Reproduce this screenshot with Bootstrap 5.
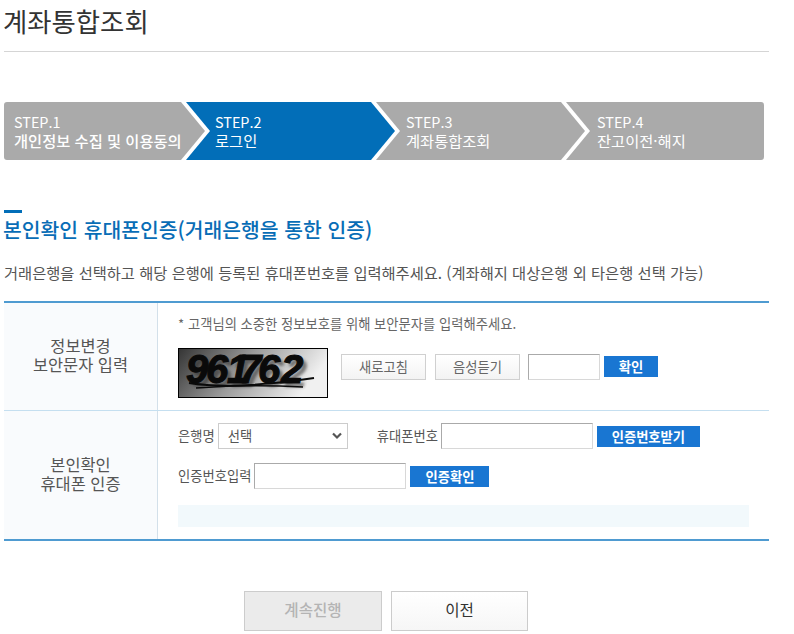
<!DOCTYPE html>
<html lang="ko">
<head>
<meta charset="utf-8">
<title>계좌통합조회</title>
<link href="https://cdn.jsdelivr.net/npm/bootstrap@5.3.0/dist/css/bootstrap.min.css" rel="stylesheet">
<style>
html,body{height:634px;overflow:hidden;background:#fff}
body{font-family:"Noto Sans CJK KR","Noto Sans",sans-serif;color:#555;font-size:13.3px;padding:0 25px 0 4px}
.page-title{font-size:26.4px;font-weight:400;color:#333;line-height:42px;height:52px;margin:0;text-indent:-1px;border-bottom:1px solid #d5d5d5}
.step-bar{display:flex;width:760px;height:58px;margin-top:50px}
.step-box{position:relative;background:#aaa;color:#fff;font-size:15.3px;line-height:19px;padding-top:10px;height:58px}
.step-box::before,.step-box::after{content:"";position:absolute;top:0;height:58px;left:calc(100% - 5px)}
.step-box::before{width:29px;background:#fff;clip-path:polygon(0 0,5px 0,29px 50%,5px 100%,0 100%)}
.step-box::after{width:24px;background:inherit;clip-path:polygon(0 0,100% 50%,0 100%)}
.step-box:last-child::before,.step-box:last-child::after{display:none}
.step-one{width:182px;padding-left:10px;border-radius:3px 0 0 3px;z-index:4}
.step-two{width:190px;padding-left:29px;background:#026eb8;z-index:3}
.step-three{width:190px;padding-left:30px;z-index:2}
.step-four{width:198px;padding-left:31px;border-radius:0 3px 3px 0;z-index:1}
.step-box span{display:block;white-space:nowrap}
.step-box .step-num{font-size:14.4px;font-weight:400}
.step-one .step-name{font-weight:500}
.section-mark{width:18px;height:3px;background:#026eb8;margin-top:50px}
.section-title{font-size:20.4px;font-weight:500;color:#086db6;line-height:30px;margin:1px 0 0;text-indent:-1px}
.section-desc{font-size:15.3px;line-height:22px;margin:17px 0 0;color:#555;white-space:nowrap}
.form-frame{width:765px;margin-top:18px;border-top:2px solid #4f9bd1;border-bottom:2px solid #4f9bd1}
.form-row{display:flex}
.first-row{height:108px;border-bottom:1px solid #c5dff0}
.second-row{height:128px}
.head-cell{width:154px;flex:none;background:#f9fbfd;border-right:1px solid #d3e0ea;font-size:16.4px;line-height:19px;color:#555;text-align:center;display:flex;align-items:center;justify-content:center}
.first-row .head-cell{padding-bottom:4px}
.second-row .head-cell{padding-bottom:2px}
.body-cell{flex:1;padding-left:20px}
.note-line{line-height:18px;margin-top:12px;color:#666;white-space:nowrap}
.captcha-row{display:flex;align-items:flex-start;margin-top:15px}
.captcha-pic{display:block;width:150px;height:50px;border:1px solid #000;flex:none}
.gray-btn{width:85px;height:26px;padding:0;margin-top:6px;border:1px solid #d0d0d0;border-radius:0;background:linear-gradient(#fff,#f3f3f3);color:#666;font-size:13.3px;line-height:24px}
.gray-btn:hover{background:#f3f3f3;border-color:#d0d0d0;color:#666}
.first-gray{margin-left:13px}
.second-gray{margin-left:9px}
.blue-btn{height:21px;padding:0;border:0;border-radius:0;background:#1976d2;color:#fff;font-size:13.3px;font-weight:700;line-height:21px;margin-left:4px;flex:none}
.blue-btn:hover{background:#1976d2;color:#fff}
.captcha-row .blue-btn{margin-top:8px}
.w-ok{width:54px}.w-get{width:103px}.w-check{width:79px}
.plain-input{height:26px;padding:0 4px;border:1px solid #d8d8d8;border-top-color:#aaa;border-left-color:#aaa;border-radius:0;flex:none;font-size:13px}
.captcha-row .plain-input{margin-top:6px}
.w-short{width:72px;margin-left:8px}.w-long{width:152px;margin-left:4px}
.field-two .w-long{margin-left:3px}
.field-row{display:flex;align-items:center;height:26px;white-space:nowrap}
.field-one{margin-top:12px}.field-two{margin-top:14px}
.bank-select{width:130px;height:26px;padding:0 20px 0 9px;margin-left:3px;border:1px solid #ccc;border-radius:0;font-size:13.3px;color:#555;background-image:url("data:image/svg+xml,%3csvg xmlns='http://www.w3.org/2000/svg' viewBox='0 0 10 8'%3e%3cpath fill='none' stroke='%23555' stroke-width='2.2' d='M1 1.5l4 4 4-4'/%3e%3c/svg%3e");background-position:right 5px center;background-size:10px 8px;flex:none}
.phone-label{margin-left:29px}
.w-long#phoneNo{margin-left:3px}
.info-strip{width:571px;height:22px;background:#f2f9fc;margin-top:16px}
.foot-row{display:flex;justify-content:flex-start;gap:9px;margin:50px 0 0 240px}
.foot-btn{width:138px;height:40px;padding:0 0 2px;border-radius:0;font-size:15.6px;font-weight:500;border:1px solid #ccc}
.foot-btn:disabled{background:#ebebeb;color:#b4b4b4;border-color:#ccc;opacity:1}
.foot-back{width:137px;background:linear-gradient(#fff,#f6f6f6);color:#333;font-weight:400}
.foot-back:hover{background:#f6f6f6;color:#333;border-color:#ccc}
.cap-main{font-family:"Liberation Sans",sans-serif;font-style:italic;font-weight:700;font-size:40px;fill:#0a0a0a;stroke:#0a0a0a;stroke-width:1.1}
.cap-shade{fill:#333;stroke:none;opacity:.6}
</style>
</head>
<body>
<h1 class="page-title">계좌통합조회</h1>

<div class="step-bar">
  <div class="step-box step-one"><span class="step-num">STEP.1</span><span class="step-name">개인정보 수집 및 이용동의</span></div>
  <div class="step-box step-two"><span class="step-num">STEP.2</span><span class="step-name">로그인</span></div>
  <div class="step-box step-three"><span class="step-num">STEP.3</span><span class="step-name">계좌통합조회</span></div>
  <div class="step-box step-four"><span class="step-num">STEP.4</span><span class="step-name">잔고이전·해지</span></div>
</div>

<div class="section-mark"></div>
<h2 class="section-title">본인확인 휴대폰인증(거래은행을 통한 인증)</h2>
<p class="section-desc">거래은행을 선택하고 해당 은행에 등록된 휴대폰번호를 입력해주세요. (계좌해지 대상은행 외 타은행 선택 가능)</p>

<div class="form-frame">
  <div class="form-row first-row">
    <div class="head-cell"><div>정보변경<br>보안문자 입력</div></div>
    <div class="body-cell">
      <div class="note-line">* 고객님의 소중한 정보보호를 위해 보안문자를 입력해주세요.</div>
      <div class="captcha-row">
        <svg class="captcha-pic" viewBox="0 0 148 48" aria-label="보안문자">
          <defs>
            <linearGradient id="capBg" x1="0" x2="1" y1="0" y2="0.25"><stop offset="0" stop-color="#353535"/><stop offset=".5" stop-color="#9c9c9c"/><stop offset="1" stop-color="#f0f0f0"/></linearGradient>
            <filter id="capBlur" x="-10%" y="-20%" width="120%" height="140%"><feGaussianBlur stdDeviation="1.8"/></filter>
          </defs>
          <rect width="148" height="48" fill="url(#capBg)"/>
          <text class="cap-main cap-shade" x="11 31 52 64 83 106" y="38" filter="url(#capBlur)">961762</text>
          <text class="cap-main" x="7 27 48 60 79 102" y="34">961762</text>
          <path d="M10 34Q55 41 135 29" fill="none" stroke="#0a0a0a" stroke-width="1.8"/>
          <path d="M17 39Q70 35 124 38" fill="none" stroke="#0a0a0a" stroke-width="1.6"/>
        </svg>
        <button type="button" class="btn gray-btn first-gray">새로고침</button>
        <button type="button" class="btn gray-btn second-gray">음성듣기</button>
        <input type="text" class="plain-input w-short" aria-label="보안문자">
        <button type="button" class="btn blue-btn w-ok">확인</button>
      </div>
    </div>
  </div>
  <div class="form-row second-row">
    <div class="head-cell"><div>본인확인<br>휴대폰 인증</div></div>
    <div class="body-cell">
      <div class="field-row field-one">
        <label for="bankSel">은행명</label>
        <select id="bankSel" class="form-select bank-select"><option>선택</option></select>
        <label for="phoneNo" class="phone-label">휴대폰번호</label>
        <input id="phoneNo" type="text" class="plain-input w-long">
        <button type="button" class="btn blue-btn w-get">인증번호받기</button>
      </div>
      <div class="field-row field-two">
        <label for="certNo">인증번호입력</label>
        <input id="certNo" type="text" class="plain-input w-long">
        <button type="button" class="btn blue-btn w-check">인증확인</button>
      </div>
      <div class="info-strip"></div>
    </div>
  </div>
</div>

<div class="foot-row">
  <button type="button" class="btn foot-btn" disabled>계속진행</button>
  <button type="button" class="btn foot-btn foot-back">이전</button>
</div>
<script src="https://cdn.jsdelivr.net/npm/bootstrap@5.3.0/dist/js/bootstrap.bundle.min.js"></script>
</body>
</html>
